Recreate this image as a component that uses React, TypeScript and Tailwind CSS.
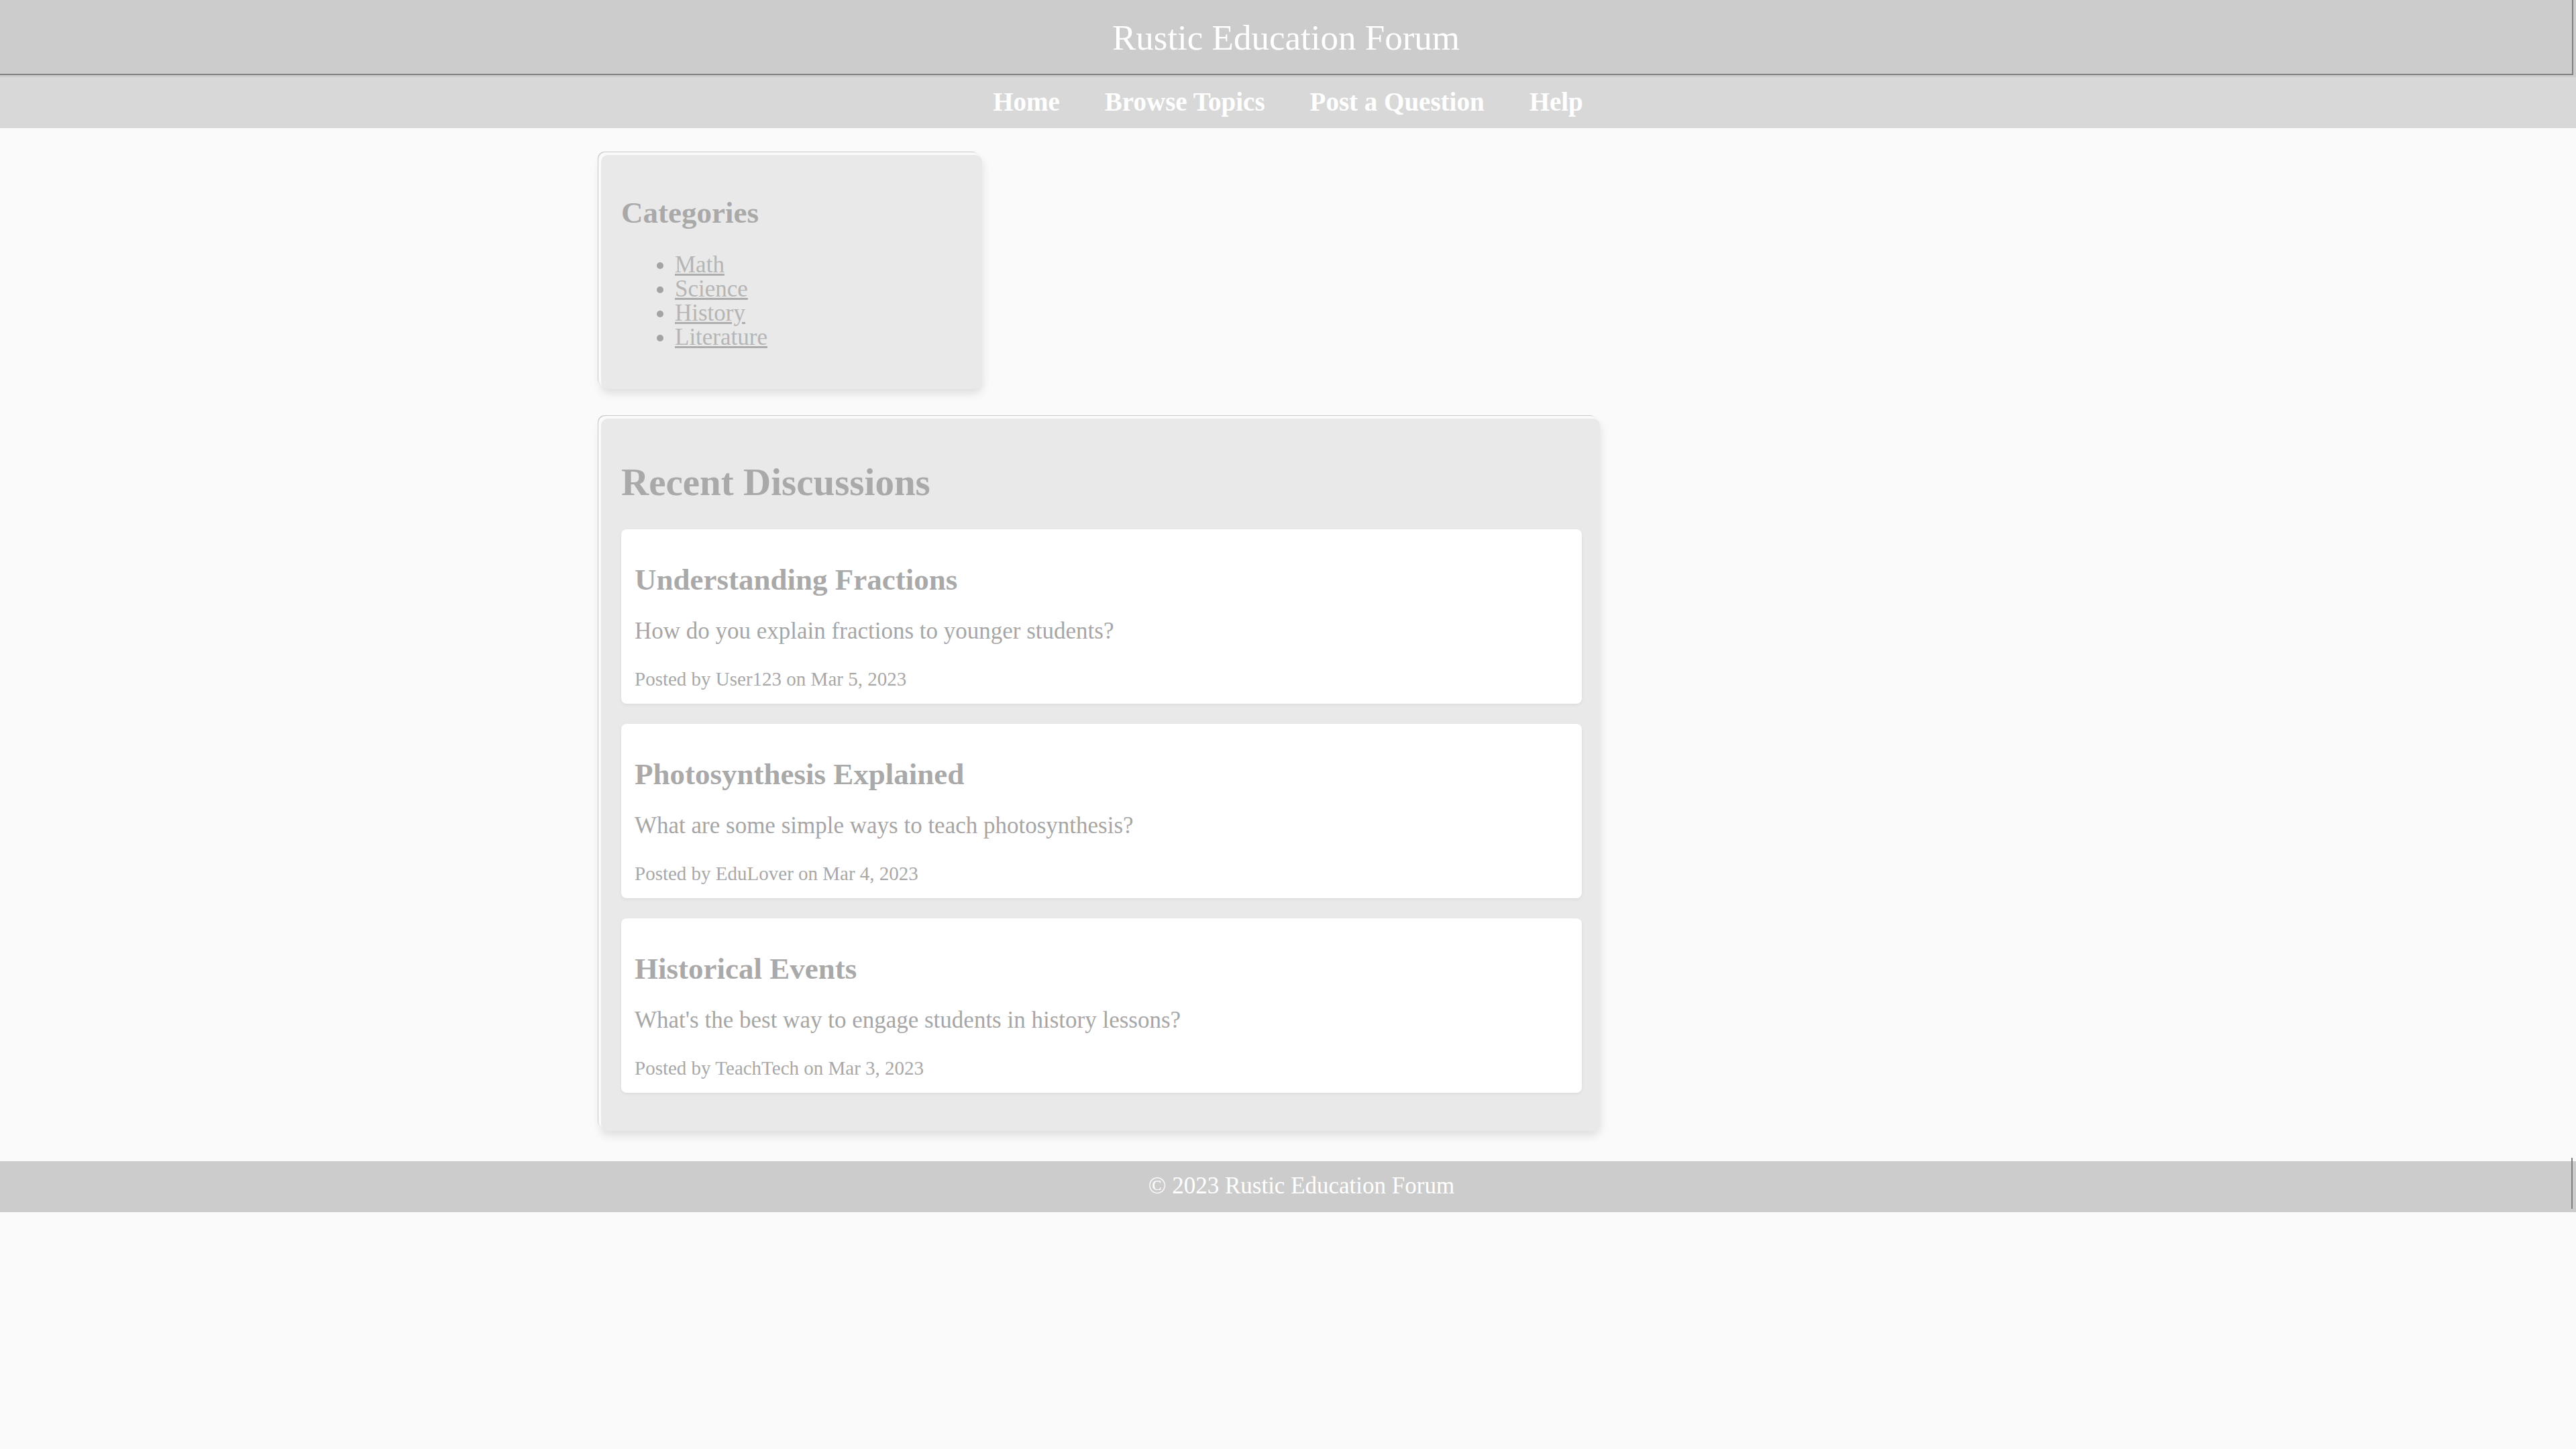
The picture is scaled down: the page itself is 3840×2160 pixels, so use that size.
import React from "react";

const discussions = [
  {
    title: "Understanding Fractions",
    body: "How do you explain fractions to younger students?",
    meta: "Posted by User123 on Mar 5, 2023",
  },
  {
    title: "Photosynthesis Explained",
    body: "What are some simple ways to teach photosynthesis?",
    meta: "Posted by EduLover on Mar 4, 2023",
  },
  {
    title: "Historical Events",
    body: "What's the best way to engage students in history lessons?",
    meta: "Posted by TeachTech on Mar 3, 2023",
  },
];

const categories = ["Math", "Science", "History", "Literature"];
const navItems = ["Home", "Browse Topics", "Post a Question", "Help"];

export default function App() {
  return (
    <div className="min-h-screen bg-[#fafafa] font-['Liberation_Serif',serif] overflow-hidden">
      <header className="bg-[#cccccc] pr-[4px] pb-[3px]">
        <div className="h-[112px] border-b-2 border-r-2 border-[#808080] flex justify-center pt-[2px]">
          <h1 className="text-[53px] leading-[108px] font-normal text-white">Rustic Education Forum</h1>
        </div>
      </header>

      <nav className="bg-[#d8d8d8] h-[76px] flex justify-center gap-[67px] pt-[2px]">
        {navItems.map((n) => (
          <a key={n} href="#" className="text-[39px] font-bold leading-[70px] text-white">
            {n}
          </a>
        ))}
      </nav>

      <main className="mt-[40px] mx-auto w-[2048px] flex flex-col items-start gap-[44px]">
        <aside className="w-[568px] rounded-[10px] bg-[#e9e9e9] px-[30px] pt-[60px] pb-[59px] shadow-[-4px_-4px_0_0_#fafafa,-5px_-5px_0_0_#c8c8c8,0_6px_14px_rgba(0,0,0,0.12)]">
          <h2 className="text-[45px] leading-[52px] font-bold text-[#a9a9a9]">Categories</h2>
          <ul className="mt-[34px] pl-[80px] list-disc text-[35px] leading-[36px] marker:text-[#a3a3a3]">
            {categories.map((c) => (
              <li key={c}>
                <a href="#" className="text-[#b5b5b5] underline decoration-[#adadad]">
                  {c}
                </a>
              </li>
            ))}
          </ul>
        </aside>

        <section className="w-[1489px] rounded-[10px] bg-[#e9e9e9] pl-[30px] pr-[27px] pt-[63px] pb-[57px] shadow-[-4px_-4px_0_0_#fafafa,-5px_-5px_0_0_#c8c8c8,0_6px_14px_rgba(0,0,0,0.12)]">
          <h2 className="text-[57px] leading-[64px] font-bold text-[#a9a9a9]">Recent Discussions</h2>
          <div className="mt-[38px] flex flex-col gap-[30px]">
            {discussions.map((d) => (
              <article
                key={d.title}
                className="h-[260px] rounded-[8px] bg-white px-[20px] pt-[50px] pb-[20px] shadow-[0_2px_5px_rgba(0,0,0,0.06)]"
              >
                <h3 className="text-[45px] leading-[50px] font-bold text-[#a9a9a9]">{d.title}</h3>
                <p className="mt-[32px] text-[35px] leading-[40px] text-[#a6a6a6]">{d.body}</p>
                <p className="mt-[34px] text-[29px] leading-[34px] text-[#a8a8a8]">{d.meta}</p>
              </article>
            ))}
          </div>
        </section>
      </main>

      <footer className="relative mt-[45px] h-[76px] bg-[#cccccc] pl-[40px] text-center text-[35px] leading-[74px] text-white">
        <span className="absolute right-[5px] -top-[5px] h-[76px] w-[2px] bg-[#808080]" />
        © 2023 Rustic Education Forum
      </footer>
    </div>
  );
}
